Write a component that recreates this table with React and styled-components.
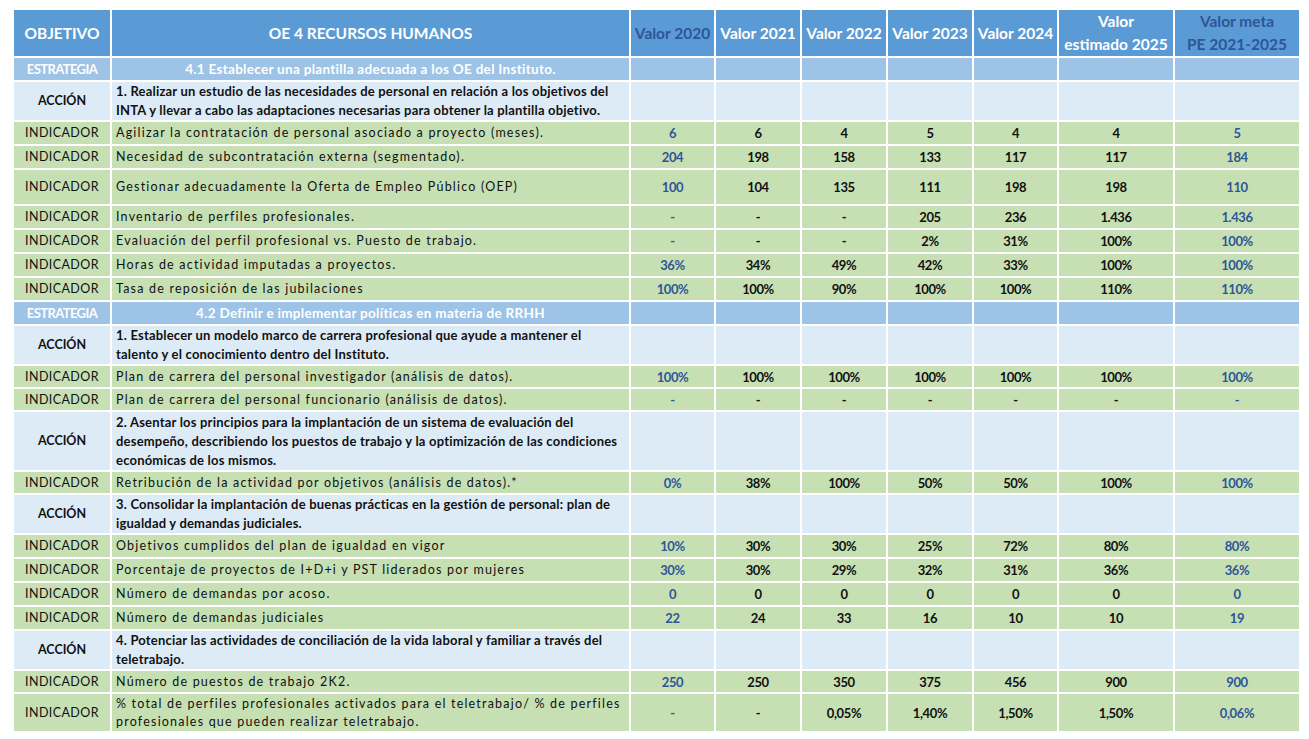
import React from "react";
import styled, { createGlobalStyle, css } from "styled-components";

const Global = createGlobalStyle`
  html, body { margin: 0; padding: 0; background: #ffffff; }
  body { font-family: Lato, "Liberation Sans", sans-serif; }
`;

const C = {
  head: "#5B9BD5",
  strat: "#9DC3E6",
  action: "#DDEBF7",
  ind: "#C6E0B4",
  navy: "#2F5597",
  ink: "#111111",
};

const Page = styled.div`
  padding: 8px 0 0 12px;
`;

const Table = styled.table`
  border-collapse: separate;
  border-spacing: 2px;
  table-layout: fixed;
  width: 1289px;
`;

const HeadCell = styled.th`
  background: ${C.head};
  height: 46px;
  padding: 0;
  color: ${(p) => (p.$navy ? C.navy : "#ffffff")};
  font-size: 15.5px;
  font-weight: 700;
  line-height: 23px;
  text-align: center;
  vertical-align: middle;
  white-space: nowrap;
`;

const Row = styled.tr`
  height: ${(p) => p.$h}px;
  background: ${(p) =>
    p.$kind === "strategy" ? C.strat : p.$kind === "action" ? C.action : C.ind};
`;

const LabelCell = styled.td`
  padding: 0;
  text-align: center;
  vertical-align: middle;
  line-height: 16px;
  font-size: 12px;
  white-space: nowrap;
  ${(p) =>
    p.$kind === "strategy"
      ? css`
          color: #ffffff;
          font-weight: 700;
          font-size: 13px;
          letter-spacing: -0.6px;
        `
      : p.$kind === "action"
      ? css`
          color: ${C.ink};
          font-weight: 700;
          font-size: 12.5px;
        `
      : css`
          color: ${C.ink};
          font-weight: 400;
          font-size: 12.5px;
          letter-spacing: 0.4px;
        `}
`;

const DescCell = styled.td`
  padding: 0 4px;
  vertical-align: middle;
  white-space: nowrap;
  overflow: hidden;
  ${(p) =>
    p.$kind === "strategy"
      ? css`
          color: #ffffff;
          font-weight: 700;
          font-size: 13.5px;
          letter-spacing: 0.3px;
          line-height: 16px;
          text-align: center;
        `
      : p.$kind === "action"
      ? css`
          color: ${C.ink};
          font-weight: 700;
          font-size: 13px;
          letter-spacing: 0.2px;
          line-height: 19px;
        `
      : css`
          color: ${C.ink};
          font-weight: 400;
          font-size: 12.5px;
          line-height: 18px;
          letter-spacing: 1.2px;
        `}
`;

const ValueCell = styled.td`
  padding: 0;
  text-align: center;
  vertical-align: middle;
  font-size: 13px;
  line-height: 16px;
  font-weight: 700;
  letter-spacing: -0.4px;
  color: ${(p) => (p.$navy ? C.navy : C.ink)};
`;

const Col = styled.col`
  width: ${(p) => p.$w}px;
`;

const widths = [96, 517, 83, 84, 84, 84, 83, 114, 124];

const headers = [
  { t: "Valor 2020", navy: true },
  { t: "Valor 2021" },
  { t: "Valor 2022" },
  { t: "Valor 2023" },
  { t: "Valor 2024" },
  { t: ["Valor", "estimado 2025"] },
  { t: ["Valor meta", "PE 2021-2025"], navy: true },
];

const rows = [
  { k: "strategy", h: 22, label: "ESTRATEGIA", text: ["4.1 Establecer una plantilla adecuada a los OE del Instituto."] },
  {
    k: "action",
    h: 38,
    label: "ACCIÓN",
    text: [
      "1. Realizar un estudio de las necesidades de personal en relación a los objetivos del",
      "INTA y llevar a cabo las adaptaciones necesarias para obtener la plantilla objetivo.",
    ],
  },
  { k: "ind", h: 22, text: ["Agilizar la contratación de personal asociado a proyecto (meses)."], v: ["6", "6", "4", "5", "4", "4", "5"] },
  { k: "ind", h: 22, text: ["Necesidad de subcontratación externa (segmentado)."], v: ["204", "198", "158", "133", "117", "117", "184"] },
  { k: "ind", h: 34, text: ["Gestionar adecuadamente la Oferta de Empleo Público (OEP)"], v: ["100", "104", "135", "111", "198", "198", "110"] },
  { k: "ind", h: 22, text: ["Inventario de perfiles profesionales."], v: ["-", "-", "-", "205", "236", "1.436", "1.436"] },
  { k: "ind", h: 22, text: ["Evaluación del perfil profesional vs. Puesto de trabajo."], v: ["-", "-", "-", "2%", "31%", "100%", "100%"] },
  { k: "ind", h: 22, text: ["Horas de actividad imputadas a proyectos."], v: ["36%", "34%", "49%", "42%", "33%", "100%", "100%"] },
  { k: "ind", h: 22, text: ["Tasa de reposición de las jubilaciones"], v: ["100%", "100%", "90%", "100%", "100%", "110%", "110%"] },
  { k: "strategy", h: 22, label: "ESTRATEGIA", text: ["4.2 Definir e implementar políticas en materia de RRHH"] },
  {
    k: "action",
    h: 38,
    label: "ACCIÓN",
    text: [
      "1. Establecer un modelo marco de carrera profesional que ayude a mantener el",
      "talento y el conocimiento dentro del Instituto.",
    ],
  },
  { k: "ind", h: 21, text: ["Plan de carrera del personal investigador (análisis de datos)."], v: ["100%", "100%", "100%", "100%", "100%", "100%", "100%"] },
  { k: "ind", h: 21, text: ["Plan de carrera del personal funcionario (análisis de datos)."], v: ["-", "-", "-", "-", "-", "-", "-"] },
  {
    k: "action",
    h: 58,
    label: "ACCIÓN",
    text: [
      "2. Asentar los principios para la implantación de un sistema de evaluación del",
      "desempeño, describiendo los puestos de trabajo y la optimización de las condiciones",
      "económicas de los mismos.",
    ],
  },
  { k: "ind", h: 21, text: ["Retribución de la actividad por objetivos (análisis de datos).*"], v: ["0%", "38%", "100%", "50%", "50%", "100%", "100%"] },
  {
    k: "action",
    h: 38,
    label: "ACCIÓN",
    text: [
      "3. Consolidar la implantación de buenas prácticas en la gestión de personal: plan de",
      "igualdad y demandas judiciales.",
    ],
  },
  { k: "ind", h: 22, text: ["Objetivos cumplidos del plan de igualdad en vigor"], v: ["10%", "30%", "30%", "25%", "72%", "80%", "80%"] },
  { k: "ind", h: 22, text: ["Porcentaje de proyectos de I+D+i y PST liderados por mujeres"], v: ["30%", "30%", "29%", "32%", "31%", "36%", "36%"] },
  { k: "ind", h: 22, text: ["Número de demandas por acoso."], v: ["0", "0", "0", "0", "0", "0", "0"] },
  { k: "ind", h: 22, text: ["Número de demandas judiciales"], v: ["22", "24", "33", "16", "10", "10", "19"] },
  {
    k: "action",
    h: 37,
    label: "ACCIÓN",
    text: [
      "4. Potenciar las actividades de conciliación de la vida laboral y familiar a través del",
      "teletrabajo.",
    ],
  },
  { k: "ind", h: 21, text: ["Número de puestos de trabajo 2K2."], v: ["250", "250", "350", "375", "456", "900", "900"] },
  {
    k: "ind",
    h: 37,
    text: [
      "% total de perfiles profesionales activados para el teletrabajo/ % de perfiles",
      "profesionales que pueden realizar teletrabajo.",
    ],
    v: ["-", "-", "0,05%", "1,40%", "1,50%", "1,50%", "0,06%"],
  },
];

const Lines = ({ lines }) =>
  lines.map((l, i) => (
    <React.Fragment key={i}>
      {i > 0 && <br />}
      {l}
    </React.Fragment>
  ));

export default function App() {
  return (
    <Page>
      <Global />
      <Table>
        <colgroup>
          {widths.map((w, i) => (
            <Col key={i} $w={w} />
          ))}
        </colgroup>
        <thead>
          <tr>
            <HeadCell>OBJETIVO</HeadCell>
            <HeadCell>OE 4 RECURSOS HUMANOS</HeadCell>
            {headers.map((h, i) => (
              <HeadCell key={i} $navy={h.navy}>
                <Lines lines={Array.isArray(h.t) ? h.t : [h.t]} />
              </HeadCell>
            ))}
          </tr>
        </thead>
        <tbody>
          {rows.map((r, i) => (
            <Row key={i} $kind={r.k} $h={r.h}>
              <LabelCell $kind={r.k}>{r.label || "INDICADOR"}</LabelCell>
              <DescCell $kind={r.k}>
                <Lines lines={r.text} />
              </DescCell>
              {(r.v || ["", "", "", "", "", "", ""]).map((v, j) => (
                <ValueCell key={j} $navy={j === 0 || j === 6}>
                  {v}
                </ValueCell>
              ))}
            </Row>
          ))}
        </tbody>
      </Table>
    </Page>
  );
}
